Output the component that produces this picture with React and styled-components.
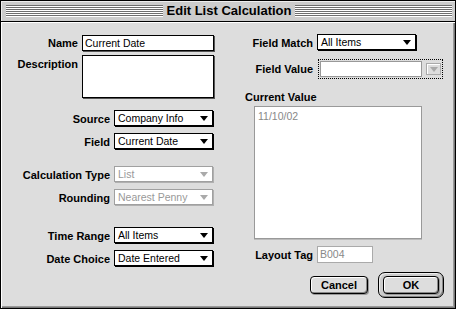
import React from "react";
import styled, { createGlobalStyle } from "styled-components";

const GlobalStyle = createGlobalStyle`
  html, body {
    margin: 0;
    padding: 0;
    background: #dddddd;
  }
  * {
    box-sizing: border-box;
  }
`;

export default function App() {
  return (
    <>
      <GlobalStyle />
      <Window>
        <TitleBar>
          <Stripes $ml={5} />
          <Title>Edit List Calculation</Title>
          <Stripes $mr={3} />
        </TitleBar>
        <Body>
          {/* left side of the dialog */}
          <Column>
            <Row $mt={13}>
              <Label $w={77}>Name</Label>
              <TextField $w={132}>Current Date</TextField>
            </Row>
            <Row $mt={4} $alignTop>
              <Label $w={77} $pt={3}>
                Description
              </Label>
              <TextField $w={132} $h={43} />
            </Row>
            <Row $mt={12}>
              <Label $w={109}>Source</Label>
              <Popup value="Company Info" />
            </Row>
            <Row $mt={6}>
              <Label $w={109}>Field</Label>
              <Popup value="Current Date" />
            </Row>
            <Row $mt={16}>
              <Label $w={109}>Calculation Type</Label>
              <Popup value="List" disabled />
            </Row>
            <Row $mt={6}>
              <Label $w={109}>Rounding</Label>
              <Popup value="Nearest Penny" disabled />
            </Row>
            <Row $mt={21}>
              <Label $w={109}>Time Range</Label>
              <Popup value="All Items" />
            </Row>
            <Row $mt={6}>
              <Label $w={109}>Date Choice</Label>
              <Popup value="Date Entered" />
            </Row>
          </Column>

          {/* right side of the dialog */}
          <Column>
            <Row $mt={12}>
              <Label $w={83}>Field Match</Label>
              <Popup value="All Items" />
            </Row>
            <Row $mt={8}>
              <Label $w={83}>Field Value</Label>
              <ComboRing>
                <ComboField />
                <ComboButton>
                  <Arrow $disabled />
                </ComboButton>
              </ComboRing>
            </Row>
            <SectionLabel>Current Value</SectionLabel>
            <ValueBox>11/10/02</ValueBox>
            <Row $mt={7}>
              <Label $w={83}>Layout Tag</Label>
              <TagField>B004</TagField>
            </Row>
            <Buttons>
              <Button>Cancel</Button>
              <DefaultRing>
                <Button $w={56}>OK</Button>
              </DefaultRing>
            </Buttons>
          </Column>
        </Body>
      </Window>
    </>
  );
}

function Popup({ value, disabled }) {
  return (
    <PopupBox $disabled={disabled}>
      <span>{value}</span>
      <Arrow $disabled={disabled} />
    </PopupBox>
  );
}

// - Styled Components - //
const Window = styled.div`
  width: 456px;
  height: 309px;
  border: 1px solid #000;
  display: flex;
  flex-direction: column;
  background: #dddddd;
  font-family: "Liberation Sans", Arial, sans-serif;
`;

// Title bar
const TitleBar = styled.div`
  height: 21px;
  flex-shrink: 0;
  display: flex;
  align-items: center;
  background: #cccccc;
  border-bottom: 1px solid #000;
  box-shadow: inset 1px 1px 0 #eeeeee;
`;
const Stripes = styled.div`
  flex: 1;
  height: 12px;
  margin-left: ${(p) => p.$ml || 0}px;
  margin-right: ${(p) => p.$mr || 0}px;
  background: repeating-linear-gradient(
    to bottom,
    #6e6e6e 0 1px,
    #ffffff 1px 2px
  );
`;
const Title = styled.div`
  padding: 0 4px;
  font-size: 13px;
  font-weight: bold;
  color: #000;
  line-height: 20px;
`;

// Body
const Body = styled.div`
  flex: 1;
  display: grid;
  grid-template-columns: 229px 1fr;
  box-shadow: inset 1px 1px 0 #ffffff, inset -1px -1px 0 #777777,
    inset -2px -2px 0 #999999;
`;
const Column = styled.div`
  display: flex;
  flex-direction: column;
`;
const Row = styled.div`
  display: flex;
  align-items: ${(p) => (p.$alignTop ? "flex-start" : "center")};
  gap: 4px;
  margin-top: ${(p) => p.$mt || 0}px;
`;
const Label = styled.div`
  width: ${(p) => p.$w}px;
  padding-top: ${(p) => p.$pt || 0}px;
  text-align: right;
  font-size: 11px;
  font-weight: bold;
  color: #000;
  white-space: nowrap;
`;
const SectionLabel = styled.div`
  margin-top: 12px;
  padding-left: 15px;
  height: 12px;
  line-height: 12px;
  font-size: 11px;
  font-weight: bold;
`;

// Fields
const TextField = styled.div`
  width: ${(p) => p.$w}px;
  height: ${(p) => p.$h || 16}px;
  background: #fff;
  border: 1px solid #000;
  box-shadow: 1px 1px 0 #555555;
  padding: 0 2px;
  font-size: 10.5px;
  line-height: 14px;
  color: #000;
`;
const ValueBox = styled.div`
  margin: 3px 0 0 24px;
  width: 168px;
  height: 133px;
  background: #fff;
  border: 1px solid #999999;
  box-shadow: 0 1px 0 #bbbbbb;
  padding: 3px 3px;
  font-size: 10.5px;
  color: #888888;
`;
const TagField = styled.div`
  width: 56px;
  height: 17px;
  background: #fff;
  border: 1px solid #aaaaaa;
  padding: 0 2px;
  font-size: 10.5px;
  line-height: 15px;
  color: #888888;
`;

// Popups
const PopupBox = styled.div`
  width: 99px;
  height: 16px;
  margin: 0 1px 1px 0;
  display: flex;
  align-items: center;
  justify-content: space-between;
  padding: 0 4px 0 3px;
  background: #fff;
  border: 1px solid ${(p) => (p.$disabled ? "#a0a0a0" : "#000")};
  box-shadow: 1px 1px 0 ${(p) => (p.$disabled ? "#b0b0b0" : "#000")};
  font-size: 10.5px;
  color: ${(p) => (p.$disabled ? "#999999" : "#000")};
  white-space: nowrap;
`;
const Arrow = styled.span`
  width: 0;
  height: 0;
  border-left: 4px solid transparent;
  border-right: 4px solid transparent;
  border-top: 5px solid ${(p) => (p.$disabled ? "#aaaaaa" : "#000")};
`;

// Combo box with focus ring
const ComboRing = styled.div`
  margin-left: 1px;
  width: 125px;
  height: 20px;
  display: flex;
  align-items: center;
  padding: 0 1px;
  border: 1px dotted #000;
`;
const ComboField = styled.div`
  width: 103px;
  height: 16px;
  background: #fff;
  border: 1px solid #999999;
`;
const ComboButton = styled.div`
  margin-left: 4px;
  width: 15px;
  height: 12px;
  display: flex;
  align-items: center;
  justify-content: center;
  background: #dddddd;
  border: 1px solid #aaaaaa;
  box-shadow: inset 1px 1px 0 #fff;
`;

// Buttons
const Buttons = styled.div`
  margin-top: 9px;
  padding-right: 11px;
  display: flex;
  align-items: center;
  justify-content: flex-end;
  gap: 10px;
`;
const Button = styled.div`
  width: ${(p) => p.$w || 58}px;
  height: 18px;
  display: flex;
  align-items: center;
  justify-content: center;
  border: 1px solid #000;
  border-radius: 4px;
  background: #dddddd;
  box-shadow: inset 1px 1px 0 #ffffff, inset -1px -1px 0 #888888,
    1px 1px 0 #999999;
  font-size: 11px;
  font-weight: bold;
  color: #000;
`;
const DefaultRing = styled.div`
  width: 66px;
  height: 26px;
  display: flex;
  align-items: center;
  justify-content: center;
  border: 1px solid #000;
  border-radius: 7px;
  background: #cccccc;
  box-shadow: inset 1px 1px 0 #eeeeee, inset -1px -1px 0 #888888;
`;
